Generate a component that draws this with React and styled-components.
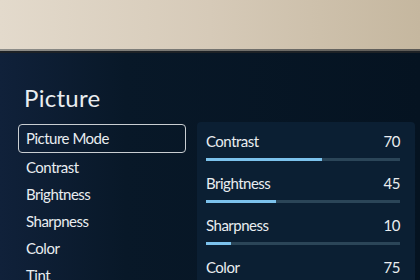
import React from 'react'
import styled, { createGlobalStyle } from 'styled-components';

const GlobalStyle = createGlobalStyle`
  html, body { margin: 0; padding: 0; }
  body { width: 420px; height: 280px; overflow: hidden; font-family: Lato, "Open Sans", sans-serif; }
`

const menu = ['Picture Mode', 'Contrast', 'Brightness', 'Sharpness', 'Color', 'Tint'];

const settings = [
  { label: 'Contrast', value: 70, fill: 60 },
  { label: 'Brightness', value: 45, fill: 36 },
  { label: 'Sharpness', value: 10, fill: 13 },
  { label: 'Color', value: 75, fill: 64 },
];

function App() {
  return (
    <ROOM>
      <GlobalStyle />
      <WALL />
      <BEZEL />
      <SCREEN>
        <TITLE>Picture</TITLE>
        <BODY>
          <MENU>
            {menu.map((item, i) => (
              <MENU_ITEM key={item} selected={i === 0}>{item}</MENU_ITEM>
            ))}
          </MENU>
          <PANEL>
            {settings.map(s => (
              <SETTING key={s.label}>
                <SETTING_HEAD>
                  <span>{s.label}</span>
                  <span>{s.value}</span>
                </SETTING_HEAD>
                <TRACK>
                  <FILL style={{ width: `${s.fill}%` }} />
                </TRACK>
              </SETTING>
            ))}
          </PANEL>
        </BODY>
      </SCREEN>
    </ROOM>
  )
}

export default App

const ROOM = styled.div`
display: flex;
flex-direction: column;
width: 420px;
height: 280px;
overflow: hidden;
`
const WALL = styled.div`
height: 49px;
flex-shrink: 0;
background: linear-gradient(90deg, #e3dacc 0%, #d6cab8 50%, #c5b79f 100%);
`
const BEZEL = styled.div`
height: 2px;
flex-shrink: 0;
background: linear-gradient(90deg, #8e8e8a, #5c5a56);
border-bottom: 2px solid #1e2226;
`
const SCREEN = styled.div`
flex: 1;
display: flex;
flex-direction: column;
background: linear-gradient(90deg, #10213a 0%, #081828 30%, #051321 100%);
color: #e9edf0;
padding: 0 5px 0 18px;
`
const TITLE = styled.h1`
margin: 0;
padding: 31px 0 0 6px;
height: 38px;
font-size: 24px;
font-weight: 400;
line-height: 28px;
letter-spacing: 0.3px;
`
const BODY = styled.div`
display: flex;
gap: 11px;
align-items: flex-start;
`
const MENU = styled.div`
width: 168px;
padding-top: 2px;
display: flex;
flex-direction: column;
`
const MENU_ITEM = styled.div`
box-sizing: border-box;
height: ${p => p.selected ? '29px' : '27px'};
padding-left: 7px;
border: 1px solid ${p => p.selected ? '#c9ced2' : 'transparent'};
border-radius: 4px;
font-size: 15px;
letter-spacing: -0.5px;
line-height: 27px;
white-space: nowrap;
`
const PANEL = styled.div`
flex: 1;
height: 200px;
padding: 8px 15px 0 9px;
background: #0b1f33;
border-radius: 4px;
display: flex;
flex-direction: column;
`
const SETTING = styled.div`
height: 42px;
`
const SETTING_HEAD = styled.div`
display: flex;
justify-content: space-between;
font-size: 15px;
letter-spacing: -0.5px;
line-height: 22px;
`
const TRACK = styled.div`
margin-top: 6px;
height: 3px;
background: #2b4558;
`
const FILL = styled.div`
height: 100%;
background: #7cc2ec;
`
